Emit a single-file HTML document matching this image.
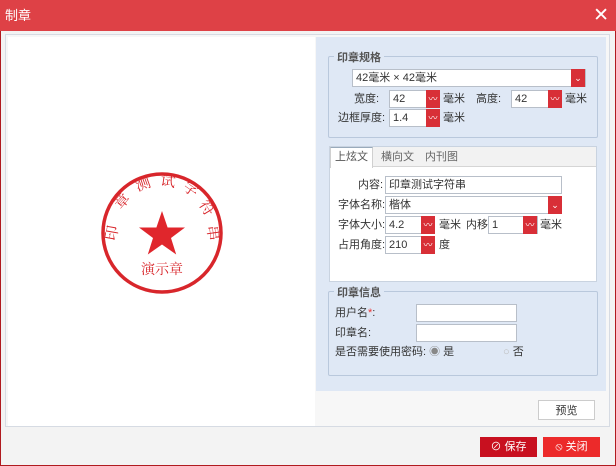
<!DOCTYPE html>
<html><head><meta charset="utf-8"><style>
*{box-sizing:border-box;margin:0;padding:0}
body{width:616px;height:466px;overflow:hidden;background:#f3f3f3;font-family:"Liberation Sans","Noto Sans CJK SC",sans-serif;font-size:11px;color:#333;position:relative}
.frame{position:absolute;left:0;top:0;width:616px;height:466px;border:1px solid #b01a1f}
.title{position:absolute;left:0;top:0;width:616px;height:31px;background:#de4146;color:#fff;font-size:13px;line-height:31px;padding-left:5px}
.x{position:absolute;right:7px;top:0;font-size:19px;color:#fff;line-height:31px;font-weight:normal}
.a{position:absolute}
.inner{left:5px;top:34px;width:605px;height:393px;border:1px solid #d6dbe3;background:#f7f7f7}
.left{left:8px;top:37px;width:307px;height:389px;background:#fff}
.right{left:316px;top:37px;width:290px;height:354px;background:#dfe8f5}
.fs{border:1px solid #b9c8dc;border-radius:2px}
.leg{position:absolute;background:#dfe8f5;padding:0 3px;color:#555;font-weight:bold;font-size:11px}
.inp{position:absolute;background:#fff;border:1px solid #b8bfc9;height:18px;line-height:16px;padding-left:3px;font-size:11px}
.dd{position:absolute;width:14px;height:18px;background:#d82f37;color:#fff;font-size:9px;text-align:center;line-height:18px}
.lbl{position:absolute;font-size:11px;line-height:18px}
.btn{position:absolute;height:20px;line-height:20px;text-align:center;font-size:11px}
</style></head><body>
<div class="frame"></div>
<div class="title">制章<span class="x">✕</span></div>
<div class="a inner"></div>
<div class="a left"></div>
<svg class="a" style="left:92px;top:163px" width="140" height="140" viewBox="0 0 140 140">
<circle cx="70" cy="70" r="59" fill="none" stroke="#d8262b" stroke-width="3.5"/>
<polygon fill="#e0262c" points="70,48 75.6,64.5 93,64.5 79,75 84.2,91.5 70,81.5 55.8,91.5 61,75 47,64.5 64.4,64.5"/>
<g font-family="Noto Serif CJK SC,serif" font-size="15" fill="#d8262b" text-anchor="middle">
<text x="20" y="75" transform="rotate(-80 20 70)">印</text>
<text x="30" y="43" transform="rotate(-50 30 38)">章</text>
<text x="51" y="26" transform="rotate(-20 51 21)">测</text>
<text x="76" y="23" transform="rotate(8 76 18)">试</text>
<text x="99" y="31" transform="rotate(35 99 26)">字</text>
<text x="115" y="50" transform="rotate(58 115 45)">符</text>
<text x="121" y="75" transform="rotate(82 121 70)">串</text>
<text x="70" y="111" font-size="14">演示章</text>
</g></svg>
<div class="a right"></div>
<div class="a fs" style="left:328px;top:56px;width:270px;height:82px"></div>
<div class="leg" style="left:334px;top:49px">印章规格</div>
<div class="inp" style="left:352px;top:69px;width:234px">42毫米 × 42毫米</div><div class="dd" style="left:571px;top:69px">⌄</div>
<div class="lbl" style="left:354px;top:90px">宽度:</div>
<div class="inp" style="left:389px;top:90px;width:50px">42</div><div class="dd" style="left:426px;top:90px">〰</div>
<div class="lbl" style="left:443px;top:90px">毫米</div>
<div class="lbl" style="left:476px;top:90px">高度:</div>
<div class="inp" style="left:511px;top:90px;width:50px">42</div><div class="dd" style="left:548px;top:90px">〰</div>
<div class="lbl" style="left:565px;top:90px">毫米</div>
<div class="lbl" style="left:338px;top:109px">边框厚度:</div>
<div class="inp" style="left:389px;top:109px;width:50px">1.4</div><div class="dd" style="left:426px;top:109px">〰</div>
<div class="lbl" style="left:443px;top:109px">毫米</div>
<div class="a" style="left:329px;top:146px;width:268px;height:136px;background:#fff;border:1px solid #c9d3e0"></div>
<div class="a" style="left:330px;top:147px;width:266px;height:20px;background:#f2f2f2;border-bottom:1px solid #d5d5d5"></div>
<div class="a" style="left:330px;top:147px;width:43px;height:21px;background:#fff;border:1px solid #d0d0d0;border-bottom:none;border-top:1px solid #9ab;text-align:center;line-height:19px;color:#555">上炫文</div>
<div class="lbl" style="left:381px;top:148px;color:#666">横向文</div>
<div class="lbl" style="left:425px;top:148px;color:#666">内刊图</div>
<div class="lbl" style="left:358px;top:176px">内容:</div>
<div class="inp" style="left:385px;top:176px;width:177px">印章测试字符串</div>
<div class="lbl" style="left:338px;top:196px">字体名称:</div>
<div class="inp" style="left:385px;top:196px;width:177px">楷体</div><div class="dd" style="left:548px;top:196px">⌄</div>
<div class="lbl" style="left:338px;top:216px">字体大小:</div>
<div class="inp" style="left:385px;top:216px;width:50px">4.2</div><div class="dd" style="left:421px;top:216px">〰</div>
<div class="lbl" style="left:439px;top:216px">毫米</div>
<div class="lbl" style="left:466px;top:216px">内移:</div>
<div class="inp" style="left:488px;top:216px;width:50px">1</div><div class="dd" style="left:523px;top:216px">〰</div>
<div class="lbl" style="left:540px;top:216px">毫米</div>
<div class="lbl" style="left:338px;top:236px">占用角度:</div>
<div class="inp" style="left:385px;top:236px;width:50px">210</div><div class="dd" style="left:421px;top:236px">〰</div>
<div class="lbl" style="left:439px;top:236px">度</div>
<div class="a fs" style="left:328px;top:291px;width:270px;height:85px"></div>
<div class="leg" style="left:334px;top:284px">印章信息</div>
<div class="lbl" style="left:335px;top:304px">用户名<span style="color:#e33">*</span>:</div>
<div class="inp" style="left:416px;top:304px;width:101px"></div>
<div class="lbl" style="left:335px;top:324px">印章名:</div>
<div class="inp" style="left:416px;top:324px;width:101px"></div>
<div class="lbl" style="left:335px;top:343px">是否需要使用密码: <span style="color:#888">◉</span> 是</div>
<div class="lbl" style="left:503px;top:343px"><span style="color:#bbb">○</span> 否</div>
<div class="btn" style="left:538px;top:400px;width:57px;background:#fff;border:1px solid #ccc">预览</div>
<div class="btn" style="left:480px;top:437px;width:57px;background:#c8101f;color:#fff">⊘ 保存</div>
<div class="btn" style="left:543px;top:437px;width:57px;background:#ec2a2a;color:#fff">⦸ 关闭</div>
</body></html>
